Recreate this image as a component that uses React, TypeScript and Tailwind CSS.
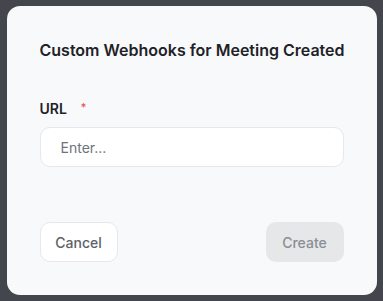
import React from "react";

export default function App() {
  return (
    <div
      className="w-[383px] h-[301px] bg-[#43464c] flex items-center justify-center"
      style={{ fontFamily: "Inter, 'Noto Sans', sans-serif" }}
    >
      <div className="w-[370px] h-[289px] bg-[#f8f9fb] rounded-[13px] px-[33px] pt-[32px] pb-[33px] flex flex-col">
        <h2 className="text-[16px] leading-[24px] font-semibold text-[#1e2227] whitespace-nowrap">
          Custom Webhooks for Meeting Created
        </h2>
        <div className="mt-[37px] flex items-start">
          <span className="text-[14px] leading-[20px] font-semibold text-[#1e2227]">URL</span>
          <span className="ml-[14px] text-[11px] leading-[16px] text-[#ef4444]">*</span>
        </div>
        <input
          className="mt-[8px] h-[40px] w-full rounded-[10px] border border-[#e6e8eb] bg-white pl-[20px] text-[14px] text-[#1e2227] placeholder:text-[#6e737b] outline-none"
          placeholder="Enter..."
        />
        <div className="mt-auto flex items-center justify-between">
          <button className="h-[40px] w-[78px] rounded-[10px] border border-[#e6e8eb] bg-white text-[14px] font-medium text-[#5c6169]">
            Cancel
          </button>
          <button className="h-[40px] w-[78px] rounded-[10px] bg-[#e6e7e9] text-[14px] font-medium text-[#8a8e95]">
            Create
          </button>
        </div>
      </div>
    </div>
  );
}
